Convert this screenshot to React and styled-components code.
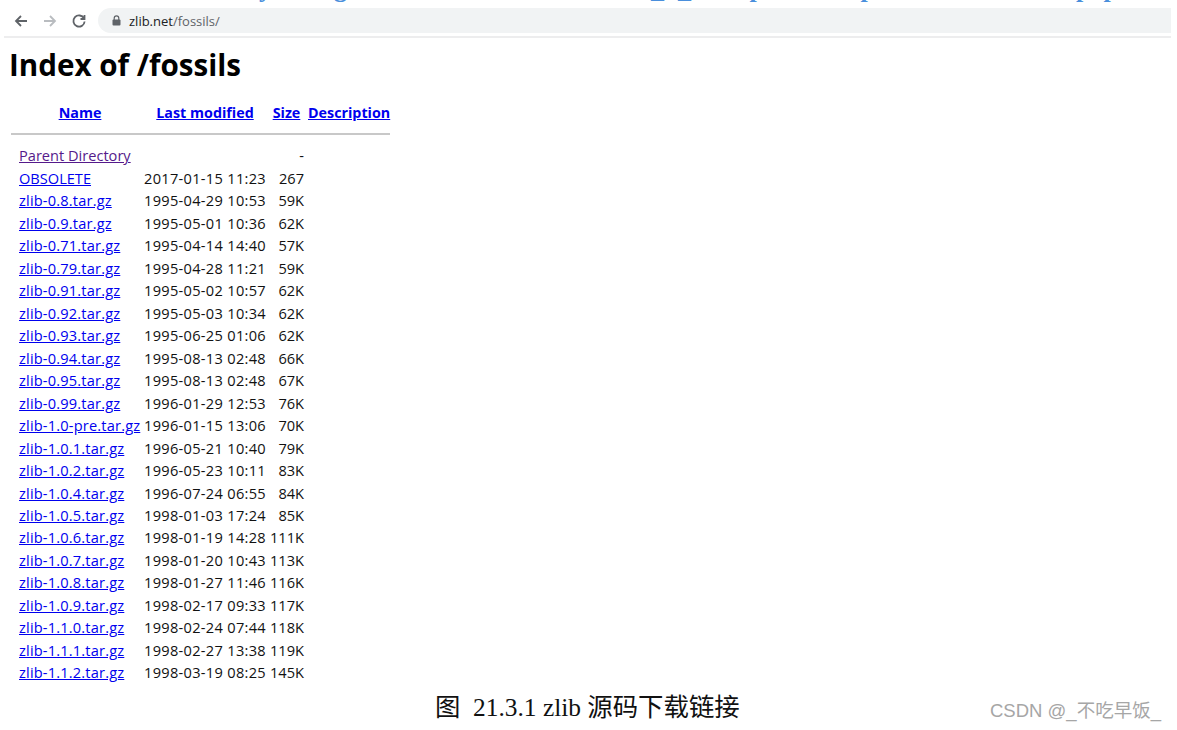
import React from 'react';
import styled, { createGlobalStyle } from 'styled-components';

const GlobalStyle = createGlobalStyle`
  html, body {
    margin: 0;
    padding: 0;
    background: #fff;
  }
`;

// the line of the document above the browser shot, only its lower edge is visible
const clippedLine = [
  ['为了获取更多', 160],
  ['library', 104],
  ['using', 75],
  ['zlib_', 317],
  ['a_', 27],
  ['zip', 73],
  ['zip', 111],
  ['pop', 243],
];

const files = [
  ['Parent Directory', '', '-'],
  ['OBSOLETE', '2017-01-15 11:23', '267'],
  ['zlib-0.8.tar.gz', '1995-04-29 10:53', '59K'],
  ['zlib-0.9.tar.gz', '1995-05-01 10:36', '62K'],
  ['zlib-0.71.tar.gz', '1995-04-14 14:40', '57K'],
  ['zlib-0.79.tar.gz', '1995-04-28 11:21', '59K'],
  ['zlib-0.91.tar.gz', '1995-05-02 10:57', '62K'],
  ['zlib-0.92.tar.gz', '1995-05-03 10:34', '62K'],
  ['zlib-0.93.tar.gz', '1995-06-25 01:06', '62K'],
  ['zlib-0.94.tar.gz', '1995-08-13 02:48', '66K'],
  ['zlib-0.95.tar.gz', '1995-08-13 02:48', '67K'],
  ['zlib-0.99.tar.gz', '1996-01-29 12:53', '76K'],
  ['zlib-1.0-pre.tar.gz', '1996-01-15 13:06', '70K'],
  ['zlib-1.0.1.tar.gz', '1996-05-21 10:40', '79K'],
  ['zlib-1.0.2.tar.gz', '1996-05-23 10:11', '83K'],
  ['zlib-1.0.4.tar.gz', '1996-07-24 06:55', '84K'],
  ['zlib-1.0.5.tar.gz', '1998-01-03 17:24', '85K'],
  ['zlib-1.0.6.tar.gz', '1998-01-19 14:28', '111K'],
  ['zlib-1.0.7.tar.gz', '1998-01-20 10:43', '113K'],
  ['zlib-1.0.8.tar.gz', '1998-01-27 11:46', '116K'],
  ['zlib-1.0.9.tar.gz', '1998-02-17 09:33', '117K'],
  ['zlib-1.1.0.tar.gz', '1998-02-24 07:44', '118K'],
  ['zlib-1.1.1.tar.gz', '1998-02-27 13:38', '119K'],
  ['zlib-1.1.2.tar.gz', '1998-03-19 08:25', '145K'],
];

const Page = styled.div`
  width: 1177px;
  height: 730px;
  overflow: hidden;
  display: flex;
  flex-direction: column;
  font-family: "Open Sans", "Noto Sans", sans-serif;
`;

const ClippedHeading = styled.div`
  height: 4px;
  margin-bottom: 4px;
  overflow: hidden;
  padding-left: 8px;
  font-family: "Liberation Serif", "Noto Sans CJK SC", serif;
  font-weight: 700;
  font-size: 26px;
  line-height: 26px;
  color: #4a8fdc;
  white-space: nowrap;
`;

const ClippedRow = styled.div`
  display: flex;
  margin-top: -24px;
`;

const ClippedWord = styled.span`
  flex: none;
  text-align: right;
`;

const Toolbar = styled.div`
  height: 25px;
  margin-left: 4px;
  margin-right: 6px;
  display: flex;
  align-items: center;
  gap: 13px;
  padding-left: 9px;
`;

const NavIcon = styled.svg`
  width: 16px;
  height: 16px;
  flex: none;
  fill: none;
  stroke: ${(p) => (p.$off ? '#b9bcc0' : '#5f6368')};
  stroke-width: 1.8;
`;

const Omnibox = styled.div`
  flex: 1;
  height: 25px;
  margin-left: -2px;
  border-radius: 13px 0 0 13px;
  background: #f1f3f4;
  display: flex;
  align-items: center;
  gap: 8px;
  padding-left: 14px;
  font-size: 13px;
`;

const Host = styled.span`
  color: #202124;
`;

const Path = styled.span`
  color: #5f6368;
`;

const ToolbarRule = styled.div`
  height: 2px;
  margin: 3px 6px 0 4px;
  background: #ededee;
`;

const Content = styled.div`
  flex: 1;
  padding: 0 0 0 9px;
  color: #000;
`;

const Title = styled.h1`
  margin: 9px 0 19px;
  font-family: "Open Sans", sans-serif;
  font-size: 29.6px;
  line-height: 36px;
  font-weight: 700;
`;

const Listing = styled.div`
  display: grid;
  grid-template-columns: 133px 122px 38px 86px;
  width: 379px;
  margin-left: 2px;
  font-size: 14.6px;
  line-height: 22.47px;
`;

const HeadLink = styled.a`
  padding-left: ${(p) => p.$pad || 0}px;
  color: #0000ee;
  font-size: 14.3px;
  font-weight: 700;
  text-decoration: underline;
  text-align: center;
  white-space: nowrap;
`;

const Divider = styled.div`
  grid-column: 1 / -1;
  height: 2px;
  background: #c8c8c8;
  margin: 9px 0 9px;
`;

const FileLink = styled.a`
  padding-left: 8px;
  color: ${(p) => (p.$visited ? '#551a8b' : '#0000ee')};
  letter-spacing: ${(p) => (p.$archive ? '0.18px' : '0')};
  text-decoration: underline;
  white-space: nowrap;
`;

const Modified = styled.span`
  white-space: nowrap;
  color: #111;
  letter-spacing: 0.3px;
`;

const Size = styled.span`
  text-align: right;
  color: #111;
  white-space: nowrap;
`;

const Footer = styled.div`
  position: relative;
  height: 0;
`;

const Caption = styled.div`
  position: absolute;
  left: 435px;
  top: -38px;
  font-family: "Liberation Serif", "Noto Sans CJK SC", serif;
  font-size: 25.4px;
  line-height: 30px;
  color: #111;
  white-space: pre;
`;

const Watermark = styled.div`
  position: absolute;
  left: 990px;
  top: -31px;
  font-family: "Liberation Sans", "Noto Sans CJK SC", sans-serif;
  font-size: 18.5px;
  line-height: 24px;
  color: #a6a6a6;
  white-space: nowrap;
`;

export default function App() {
  return (
    <Page>
      <GlobalStyle />
      <ClippedHeading>
        <ClippedRow>
          {clippedLine.map(([word, width], i) => (
            <ClippedWord key={i} style={{ width }}>{word}</ClippedWord>
          ))}
        </ClippedRow>
      </ClippedHeading>
      <Toolbar>
        <NavIcon viewBox="0 0 16 16">
          <path d="M14 8H3M8 3 3 8l5 5" />
        </NavIcon>
        <NavIcon viewBox="0 0 16 16" $off>
          <path d="M2 8h11M8 3l5 5-5 5" />
        </NavIcon>
        <NavIcon viewBox="0 0 16 16">
          <path d="M13 5.5A5.6 5.6 0 1 0 13.6 8.5M13.5 2v4h-4" />
        </NavIcon>
        <Omnibox>
          <svg width="9" height="11" viewBox="0 0 9 11">
            <path fill="none" stroke="#5f6368" strokeWidth="1.2" d="M2.2 5V3.2a2.3 2.3 0 0 1 4.6 0V5" />
            <rect x="0.5" y="4.5" width="8" height="6" rx="1" fill="#5f6368" />
          </svg>
          <span>
            <Host>zlib.net</Host>
            <Path>/fossils/</Path>
          </span>
        </Omnibox>
      </Toolbar>
      <ToolbarRule />
      <Content>
        <Title>Index of /fossils</Title>
        <Listing>
          <HeadLink $pad={5}>Name</HeadLink>
          <HeadLink>Last modified</HeadLink>
          <HeadLink $pad={3}>Size</HeadLink>
          <HeadLink $pad={4}>Description</HeadLink>
          <Divider />
          {files.map(([name, date, size], i) => (
            <React.Fragment key={name}>
              <FileLink $visited={i === 0} $archive={i > 1}>{name}</FileLink>
              <Modified>{date}</Modified>
              <Size>{size}</Size>
              <span />
            </React.Fragment>
          ))}
        </Listing>
      </Content>
      <Footer>
        <Caption>图  21.3.1 zlib 源码下载链接</Caption>
        <Watermark>CSDN @_不吃早饭_</Watermark>
      </Footer>
    </Page>
  );
}
